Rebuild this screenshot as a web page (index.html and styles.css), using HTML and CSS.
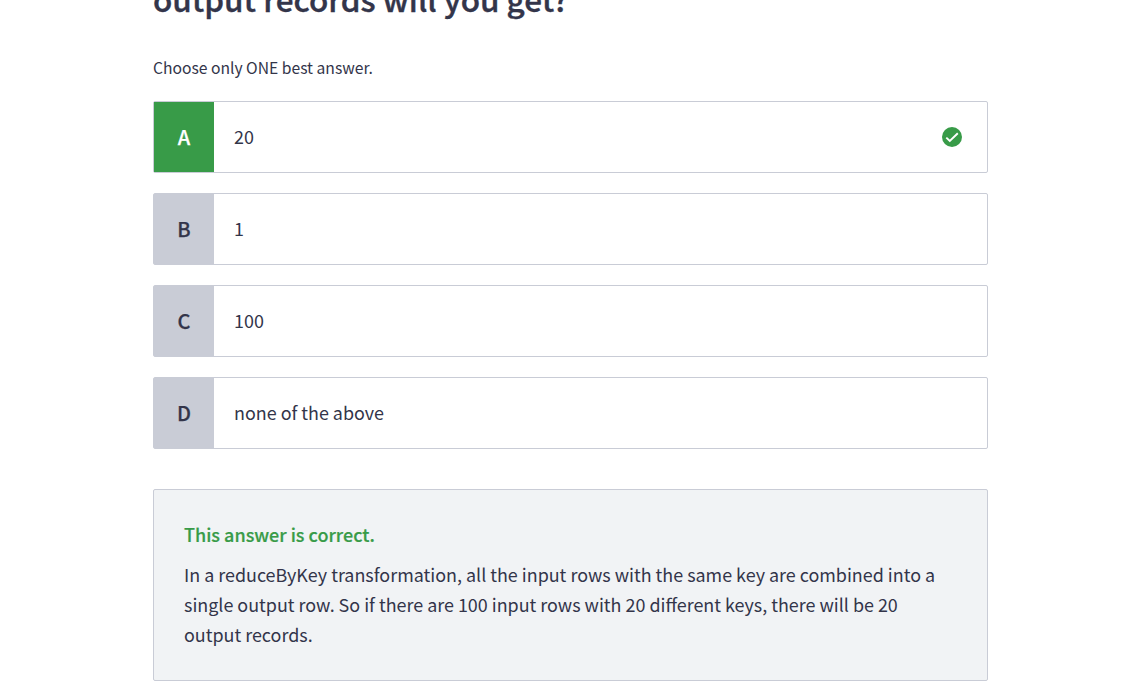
FILE: index.html
```html
<!DOCTYPE html>
<html lang="en">
<head>
<meta charset="utf-8">
<title>Quiz question</title>
<link rel="stylesheet" href="styles.css">
</head>
<body>
<main class="quiz">
  <h1 class="question">output records will you get?</h1>
  <p class="hint">Choose only ONE best answer.</p>
  <ul class="options">
    <li class="option option-correct"><span class="letter">A</span><span class="answer">20</span>
      <svg class="check" viewBox="0 0 20 20" width="20" height="20"><circle cx="10" cy="10" r="10" fill="#389b48"/><path d="M4.3 10.6l3.5 3.4 8-7.8" fill="none" stroke="#fff" stroke-width="1.9"/></svg>
    </li>
    <li class="option"><span class="letter">B</span><span class="answer">1</span></li>
    <li class="option"><span class="letter">C</span><span class="answer">100</span></li>
    <li class="option"><span class="letter">D</span><span class="answer">none of the above</span></li>
  </ul>
  <section class="feedback">
    <h2 class="feedback-title">This answer is correct.</h2>
    <p class="feedback-text">In a reduceByKey transformation, all the input rows with the same key are combined into a<br>single output row. So if there are 100 input rows with 20 different keys, there will be 20<br>output records.</p>
  </section>
</main>
</body>
</html>
```
FILE: styles.css
```css
* { box-sizing: border-box; margin: 0; padding: 0; }
body { background: #fff; color: #33354a; font-family: "Noto Sans CJK SC", "Noto Sans", sans-serif; overflow: hidden; }
.quiz { width: 835px; margin-left: 153px; }
.question { height: 40px; margin-top: -21px; font-size: 31.46px; line-height: 40px; font-weight: 500; -webkit-text-stroke: 0.4px currentColor; white-space: nowrap; }
.hint { margin-top: 39px; font-size: 15.66px; line-height: 20px; }
.options { display: flex; flex-direction: column; gap: 20px; margin-top: 23px; list-style: none; }
.option { display: flex; align-items: center; height: 72px; border: 1px solid #c9ccd6; border-radius: 2px; padding-right: 25px; }
.letter { display: flex; align-items: center; justify-content: center; width: 60px; height: 70px; padding-bottom: 2px; background: #c9ccd6; font-size: 20px; font-weight: 500; -webkit-text-stroke: 0.25px currentColor; }
.option-correct .letter { background: #389b48; color: #fff; }
.answer { flex: 1; padding: 0 0 2px 20px; font-size: 17.92px; line-height: 30px; }
.feedback { height: 192px; margin-top: 40px; padding: 29px 30px; background: #f1f3f5; border: 1px solid #c9ccd6; border-radius: 2px; }
.feedback-title { color: #389b48; font-size: 18px; line-height: 30px; font-weight: 500; -webkit-text-stroke: 0.2px currentColor; }
.feedback-text { margin-top: 10px; font-size: 17.92px; line-height: 30px; white-space: nowrap; }
```
